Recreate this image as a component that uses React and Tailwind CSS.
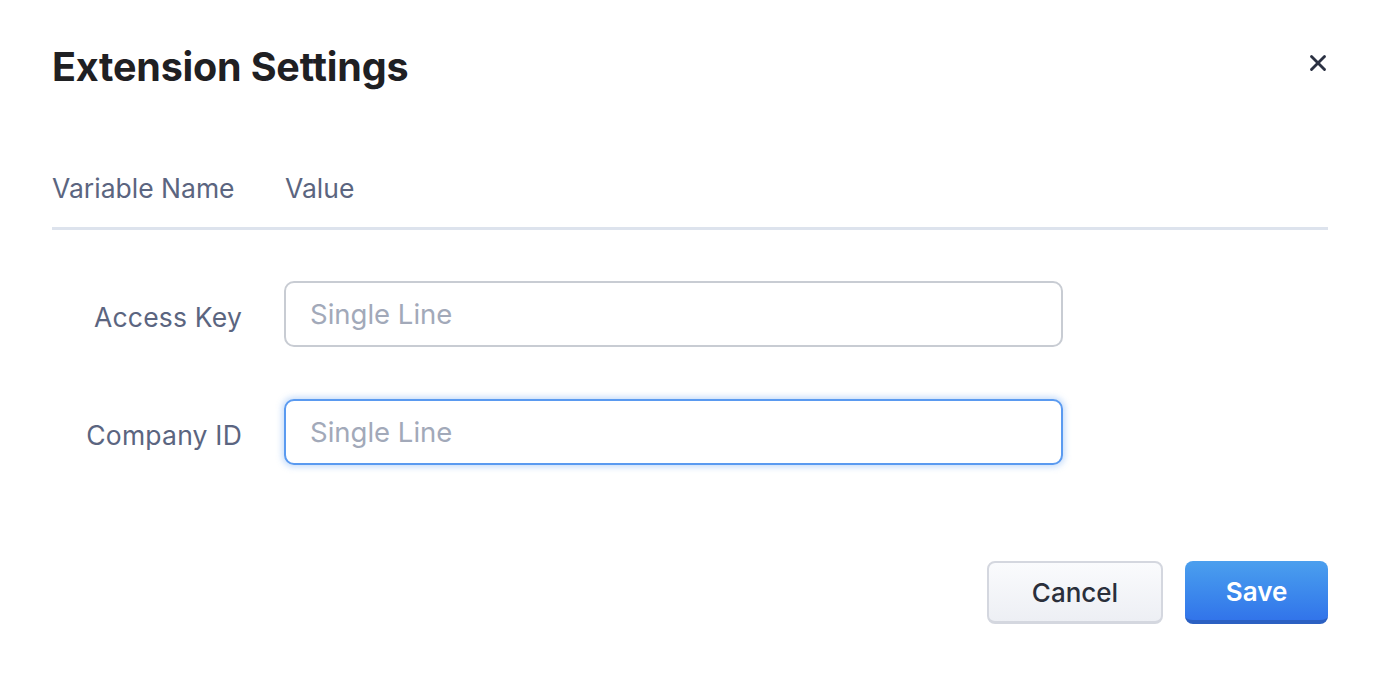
import { X } from 'lucide-react';

export default function App() {
  return (
    <div className="min-h-screen bg-white font-['Inter',sans-serif]">
      <div className="pl-[52px] pr-[50px] pt-[44px]">
        {/* Header */}
        <div className="flex items-start justify-between">
          <h1 className="text-[39.5px] font-bold leading-[46px] tracking-[-0.2px] text-[#1f2023]">Extension Settings</h1>
          <button className="mt-[6px] mr-[-3px] text-[#2b3142]">
            <X size={26} strokeWidth={2.6} />
          </button>
        </div>

        {/* Table head */}
        <div className="mt-[83px] flex border-b-[3px] border-[#dde3ed] pb-[24px] text-[26.5px] leading-[30px] text-[#5b6580]">
          <div className="w-[233px]">Variable Name</div>
          <div>Value</div>
        </div>

        {/* Rows */}
        <div className="mt-[51px] flex flex-col gap-[52px]">
          <Row label="Access Key" />
          <Row label="Company ID" focused />
        </div>

        {/* Footer */}
        <div className="mt-[96px] flex justify-end gap-[22px]">
          <button className="h-[63px] w-[176px] rounded-[8px] border-2 border-b-[3px] border-[#d4d7df] bg-gradient-to-b from-[#fafbfd] to-[#edeff4] text-[26px] font-medium text-[#2a2f3b]">
            Cancel
          </button>
          <button className="h-[63px] w-[143px] rounded-[8px] border-b-[4px] border-[#2b60c2] bg-gradient-to-b from-[#4b9fee] to-[#3274ea] pt-[2px] text-[26px] font-semibold text-white">
            Save
          </button>
        </div>
      </div>
    </div>
  );
}

function Row({ label, focused }) {
  return (
    <div className="flex items-center">
      <div className="w-[190px] pt-[8px] text-right text-[26.5px] tracking-[0.2px] text-[#5b6580]">{label}</div>
      <input
        type="text"
        placeholder="Single Line"
        className={`ml-[42px] h-[66px] w-[779px] rounded-[10px] border-2 bg-white px-[24px] text-[27.5px] outline-none placeholder:text-[#a2a9b9] ${
          focused
            ? 'border-[#5a9af0] shadow-[0_0_6px_2px_rgba(90,154,240,0.35)]'
            : 'border-[#c8ccd3]'
        }`}
      />
    </div>
  );
}
